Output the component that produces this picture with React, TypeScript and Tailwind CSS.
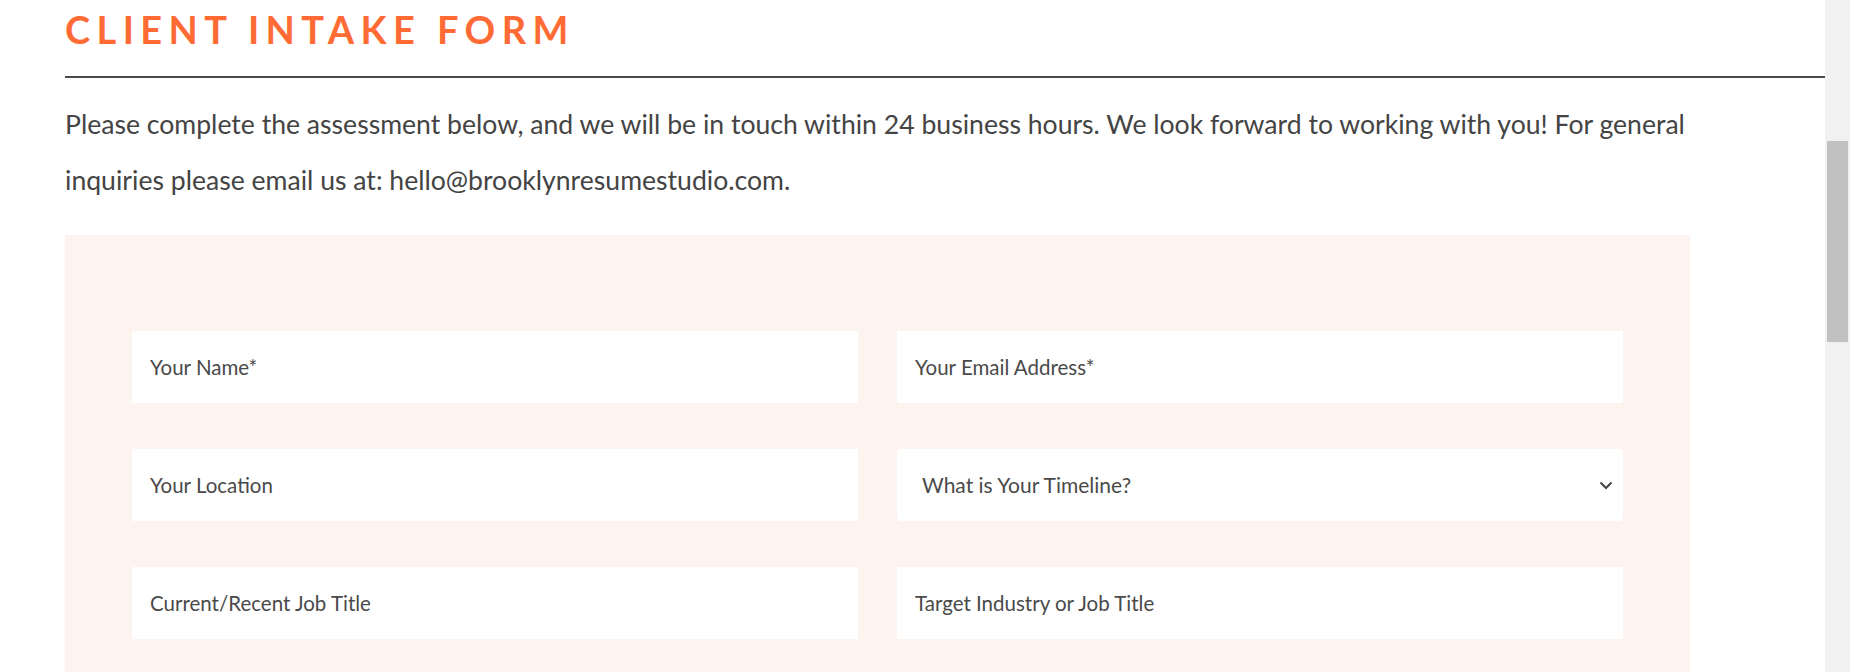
const rows: { label: string; select?: boolean }[][] = [
  [{ label: 'Your Name*' }, { label: 'Your Email Address*' }],
  [{ label: 'Your Location' }, { label: 'What is Your Timeline?', select: true }],
  [{ label: 'Current/Recent Job Title' }, { label: 'Target Industry or Job Title' }],
];

function Field({ label, select }: { label: string; select?: boolean }) {
  if (select) {
    return (
      <div className="h-[72px] bg-white rounded-[4px] flex items-center justify-between pl-[25px] pr-[10px] text-[21px] text-[#4a4a4a]">
        <span>{label}</span>
        <svg width="14" height="9" viewBox="0 0 14 9" fill="none" className="text-[#444]">
          <path d="M1.5 1.5L7 7L12.5 1.5" stroke="currentColor" strokeWidth="2" />
        </svg>
      </div>
    );
  }
  return (
    <div className="h-[72px] bg-white flex items-center pl-[18px] text-[20.5px] text-[#4a4a4a]">
      {label}
    </div>
  );
}

export default function App() {
  return (
    <div className="h-[672px] overflow-hidden flex bg-white font-['Lato',sans-serif]">
      <main className="flex-1 pl-[65px]">
        {/* Heading */}
        <h1 className="pt-[10px] text-[38px] leading-[38px] font-bold tracking-[6.4px] text-[#ff6a35]">
          CLIENT INTAKE FORM
        </h1>
        <div className="mt-[28px] h-[2px] bg-[#4a4a4a]"></div>

        <div className="max-w-[1625px]">
          <p className="mt-[18px] text-[26.6px] leading-[56px] text-[#444]">
            Please complete the assessment below, and we will be in touch within 24 business hours. We look forward to working with you! For general inquiries please email us at: hello@brooklynresumestudio.com.
          </p>

          {/* Form */}
          <div className="mt-[27px] bg-[#fdf4ef] pt-[96px] pb-[60px] px-[67px]">
            <div className="flex flex-col gap-[46px]">
              {rows.map((row, i) => (
                <div key={i} className="grid grid-cols-2 gap-x-[39px]">
                  {row.map((f) => (
                    <Field key={f.label} label={f.label} select={f.select} />
                  ))}
                </div>
              ))}
            </div>
          </div>
        </div>
      </main>

      {/* Scrollbar */}
      <aside className="w-[25px] bg-[#f1f1f1] pl-[2px] pr-[2px]">
        <div className="mt-[141px] h-[201px] bg-[#c1c1c1]"></div>
      </aside>
    </div>
  );
}
